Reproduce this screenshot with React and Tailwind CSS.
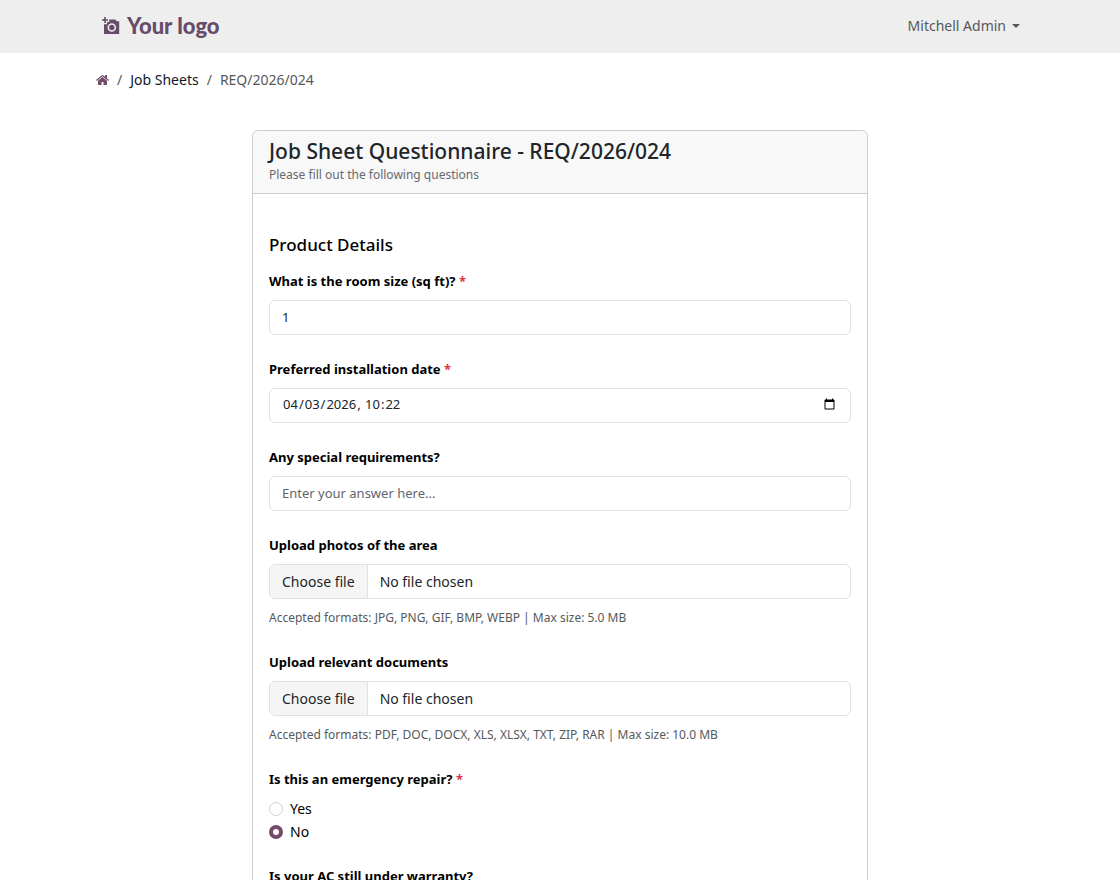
const control =
  "block w-full h-[35px] rounded-md border border-[#dee2e6] bg-white px-3 pb-[2px] text-[13px] text-[#212529] placeholder:text-[#5f656b] placeholder:opacity-100";

function CameraIcon() {
  return (
    <svg viewBox="0 0 18 18" className="size-[18px]" aria-hidden="true">
      <path
        fill="currentColor"
        fillRule="evenodd"
        d="M2.2 0h1.6v2.2H6v1.6H3.800V6H2.200V3.800H0V2.200h2.200zM7.200 2.400h6.200l1.300 1.800H17.200V17H2V7.200h3V5h2.200zM9.800 6.200a4.300 4.300 0 1 0 0 8.600 4.300 4.300 0 0 0 0-8.600zm0 1.600a2.700 2.700 0 1 1 0 5.400 2.700 2.700 0 0 1 0-5.400z"
      />
    </svg>
  );
}

function HomeIcon() {
  return (
    <svg viewBox="0 0 1664 1792" className="h-[14px] w-[13px] fill-[#714b67]" aria-hidden="true">
      <path d="M1408 992v480q0 26-19 45t-45 19H960v-384H704v384H320q-26 0-45-19t-19-45V992q0-1 .5-3t.5-3l575-474 575 474q1 2 1 6zm223-69l-62 74q-8 9-21 11h-3q-13 0-21-7L832 424 140 1001q-12 8-24 7-13-2-21-11l-62-74q-8-10-7-23.5T39 878l719-599q32-26 76-26t76 26l244 204V288q0-14 9-23t23-9h192q14 0 23 9t9 23v408l219 182q10 8 11 21.5t-7 23.5z" />
    </svg>
  );
}

function Required() {
  return <span className="text-[#dc3545]"> *</span>;
}

function Field({ id, label, required, children }) {
  return (
    <div className="mb-6">
      <label htmlFor={id} className="mb-2 block leading-[21px] font-bold text-black">
        {label}
        {required && <Required />}
      </label>
      {children}
    </div>
  );
}

function FileField({ id, label, help }) {
  return (
    <Field id={id} label={label}>
      <div className="relative">
        <input id={id} type="file" className="peer sr-only" />
        <label
          htmlFor={id}
          className="flex h-[35px] w-full cursor-pointer overflow-hidden rounded-md border border-[#dee2e6] bg-white text-sm text-[#212529] peer-focus-visible:ring-2"
        >
          <span className="flex items-center border-r border-[#dee2e6] bg-[#f5f5f5] px-3">Choose file</span>
          <span className="flex items-center px-3">No file chosen</span>
        </label>
      </div>
      <p className="mt-2 text-xs leading-[21px] text-[#55595c]">{help}</p>
    </Field>
  );
}

function Choices({ name, legend, required, selected }) {
  return (
    <fieldset className="mb-6">
      <legend className="mb-2 leading-[21px] font-bold text-black">
        {legend}
        {required && <Required />}
      </legend>
      <div className="flex flex-col gap-[2px]">
        {["Yes", "No"].map((option) => (
          <label key={option} className="flex items-center gap-[7px] text-sm leading-[21px] text-black">
            <input
              type="radio"
              name={name}
              value={option}
              defaultChecked={option === selected}
              className="size-[14px] appearance-none rounded-full border border-[#cfd2d6] bg-white checked:border-4 checked:border-[#714b67]"
            />
            {option}
          </label>
        ))}
      </div>
    </fieldset>
  );
}

export default function App() {
  return (
    <div className="min-h-screen bg-white font-['Noto_Sans',sans-serif] text-[13px]">
      <header className="bg-[#eeeeee]">
        <div className="mx-auto flex h-[53px] max-w-[960px] items-center justify-between px-5 pb-[2px]">
          <a href="#" className="flex items-center gap-[7px] pl-[2px] text-[#664c69]">
            <CameraIcon />
            <span className="font-['Lato',sans-serif] text-[22px] leading-[28px] font-black">Your logo</span>
          </a>
          <button type="button" className="flex items-center gap-[6px] text-sm text-[#55595c]">
            Mitchell Admin
            <svg viewBox="0 0 8 4" className="h-1 w-2 fill-current" aria-hidden="true">
              <path d="M0 0h8L4 4z" />
            </svg>
          </button>
        </div>
      </header>

      <main className="mx-auto max-w-[960px] px-4 pt-4">
        <nav aria-label="Breadcrumb">
          <ol className="flex items-center gap-2 text-sm leading-[21px] text-[#55595c]">
            <li>
              <a href="#" aria-label="Home" className="block">
                <HomeIcon />
              </a>
            </li>
            <li aria-hidden="true">/</li>
            <li>
              <a href="#" className="text-[#111827]">Job Sheets</a>
            </li>
            <li aria-hidden="true">/</li>
            <li>REQ/2026/024</li>
          </ol>
        </nav>

        <section className="mx-auto mt-10 w-full max-w-[616px] rounded-md border border-[#cccccc]">
          <div className="rounded-t-md border-b border-[#cccccc] bg-[#f8f8f8] px-4 py-2">
            <h1 className="text-[21px] leading-[25px] font-medium text-[#212529]">
              Job Sheet Questionnaire - REQ/2026/024
            </h1>
            <p className="text-xs leading-[21px] text-[#666a6e]">Please fill out the following questions</p>
          </div>
          <form className="px-4 pt-10 pb-4">
            <h2 className="mb-4 text-[17px] leading-[21px] font-medium text-black">Product Details</h2>

            <Field id="room-size" label="What is the room size (sq ft)?" required>
              <input id="room-size" type="text" defaultValue="1" className={control} />
            </Field>
            <Field id="install-date" label="Preferred installation date" required>
              <input
                id="install-date"
                type="datetime-local"
                defaultValue="2026-04-03T10:22"
                className={control + " [&::-webkit-datetime-edit-ampm-field]:hidden"}
              />
            </Field>
            <Field id="special" label="Any special requirements?">
              <input id="special" type="text" placeholder="Enter your answer here..." className={control} />
            </Field>
            <FileField
              id="photos"
              label="Upload photos of the area"
              help="Accepted formats: JPG, PNG, GIF, BMP, WEBP | Max size: 5.0 MB"
            />
            <FileField
              id="documents"
              label="Upload relevant documents"
              help="Accepted formats: PDF, DOC, DOCX, XLS, XLSX, TXT, ZIP, RAR | Max size: 10.0 MB"
            />
            <Choices name="emergency" legend="Is this an emergency repair?" required selected="No" />
            <Choices name="warranty" legend="Is your AC still under warranty?" />
          </form>
        </section>
      </main>
    </div>
  );
}
